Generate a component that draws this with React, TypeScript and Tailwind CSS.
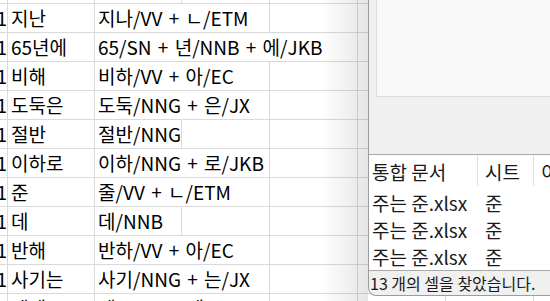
import * as React from "react";

// ---------------------------------------------------------------------------
// Data
// ---------------------------------------------------------------------------

type Row = { word: string; parse: string; span: 1 | 2 | 3 };

const ROWS: Row[] = [
  { word: "지난", parse: "지나/VV + ㄴ/ETM", span: 2 },
  { word: "65년에", parse: "65/SN + 년/NNB + 에/JKB", span: 3 },
  { word: "비해", parse: "비하/VV + 아/EC", span: 2 },
  { word: "도둑은", parse: "도둑/NNG + 은/JX", span: 2 },
  { word: "절반", parse: "절반/NNG", span: 1 },
  { word: "이하로", parse: "이하/NNG + 로/JKB", span: 2 },
  { word: "준", parse: "줄/VV + ㄴ/ETM", span: 2 },
  { word: "데", parse: "데/NNB", span: 1 },
  { word: "반해", parse: "반하/VV + 아/EC", span: 2 },
  { word: "사기는", parse: "사기/NNG + 는/JX", span: 2 },
  { word: "때에", parse: "때/NNG + 에/JKB", span: 2 },
];

const SPAN_WIDTH: Record<number, string> = {
  1: "w-[87px]",
  2: "w-[175px]",
  3: "w-[263px]",
};

const REST: Record<number, string[]> = {
  1: ["w-[88px]", "w-[88px]", "w-[88px]", "w-[88px]"],
  2: ["w-[88px]", "w-[88px]", "w-[88px]"],
  3: ["w-[88px]", "w-[88px]"],
};

const cell = "shrink-0 border-r border-b border-[#dadada]";

// ---------------------------------------------------------------------------
// Sheet
// ---------------------------------------------------------------------------

function SheetRow({ row }: { row: Row }) {
  return (
    <div className="flex h-[29px]">
      {/* column A is scrolled almost out of view, only the tail of "1" shows */}
      <div className={`${cell} flex w-[8px] justify-end overflow-hidden whitespace-nowrap leading-[28px]`}>
        <span className="shrink-0">1</span>
      </div>
      <div className={`${cell} w-[87px] whitespace-nowrap pl-[3px] leading-[28px]`}>
        {row.word}
      </div>
      <div className={`${cell} ${SPAN_WIDTH[row.span]} whitespace-nowrap pl-[3px] leading-[28px] [word-spacing:2px]`}>
        {row.parse}
      </div>
      {REST[row.span].map((w, i) => (
        <div key={i} className={`${cell} ${w}`} />
      ))}
    </div>
  );
}

function Sheet() {
  return (
    <div className="flex flex-col bg-white text-[19px] text-black">
      <div className="flex h-[4px]">
        <div className={`${cell} w-[8px]`} />
        <div className={`${cell} w-[87px]`} />
        <div className={`${cell} w-[87px]`} />
        <div className={`${cell} w-[88px]`} />
        <div className={`${cell} w-[88px]`} />
        <div className={`${cell} w-[88px]`} />
        <div className={`${cell} w-[88px]`} />
      </div>
      {ROWS.map((r) => (
        <SheetRow key={r.word} row={r} />
      ))}
    </div>
  );
}

// ---------------------------------------------------------------------------
// Find dialog (results part)
// ---------------------------------------------------------------------------

const RESULTS = ["주는 준.xlsx", "주는 준.xlsx", "주는 준.xlsx"];

function FindDialog() {
  return (
    <div className="absolute left-[368px] top-0 flex h-[296px] w-[220px] flex-col rounded-bl-[8px] border-b border-l border-[#9c9c9c] bg-[#f0f0f0]">
      <div className="ml-[7px] h-[97px] shrink-0 border-b border-l border-[#dcdcdc] bg-[#f9f9f9]" />

      {/* result list */}
      <div className="mt-[57px] h-[117px] shrink-0 overflow-hidden border-b border-t border-[#a9a9a9] bg-white text-[19px] text-[#1a1a1a]">
        <div className="flex h-[34px] items-start">
          <div className="h-[31px] w-[109px] shrink-0 whitespace-nowrap border-r border-[#e0e0e0] pl-[3px] leading-[34px]">
            통합 문서
          </div>
          <div className="h-[31px] w-[56px] shrink-0 whitespace-nowrap border-r border-[#e0e0e0] pl-[7px] leading-[34px]">
            시트
          </div>
          <div className="shrink-0 whitespace-nowrap pl-[7px] leading-[34px]">이름</div>
        </div>
        {RESULTS.map((r, i) => (
          <div key={i} className="flex h-[27px] leading-[27px]">
            <div className="w-[109px] shrink-0 whitespace-nowrap pl-[3px]">{r}</div>
            <div className="w-[56px] shrink-0 pl-[7px]">준</div>
          </div>
        ))}
      </div>

      {/* status */}
      <div className="h-[24px] whitespace-nowrap pl-[1px] text-[16px] leading-[24px] text-[#1a1a1a]">
        13 개의 셀을 찾았습니다.
      </div>
    </div>
  );
}

export default function App() {
  return (
    <div
      className="relative h-[301px] w-[550px] overflow-hidden bg-white"
      style={{ fontFamily: '"Noto Sans CJK KR", "Noto Sans", sans-serif' }}
    >
      <Sheet />
      {/* window shadow on the sheet */}
      <div className="absolute left-[320px] top-0 h-full w-[48px] bg-gradient-to-r from-transparent to-black/10" />
      <FindDialog />
    </div>
  );
}
